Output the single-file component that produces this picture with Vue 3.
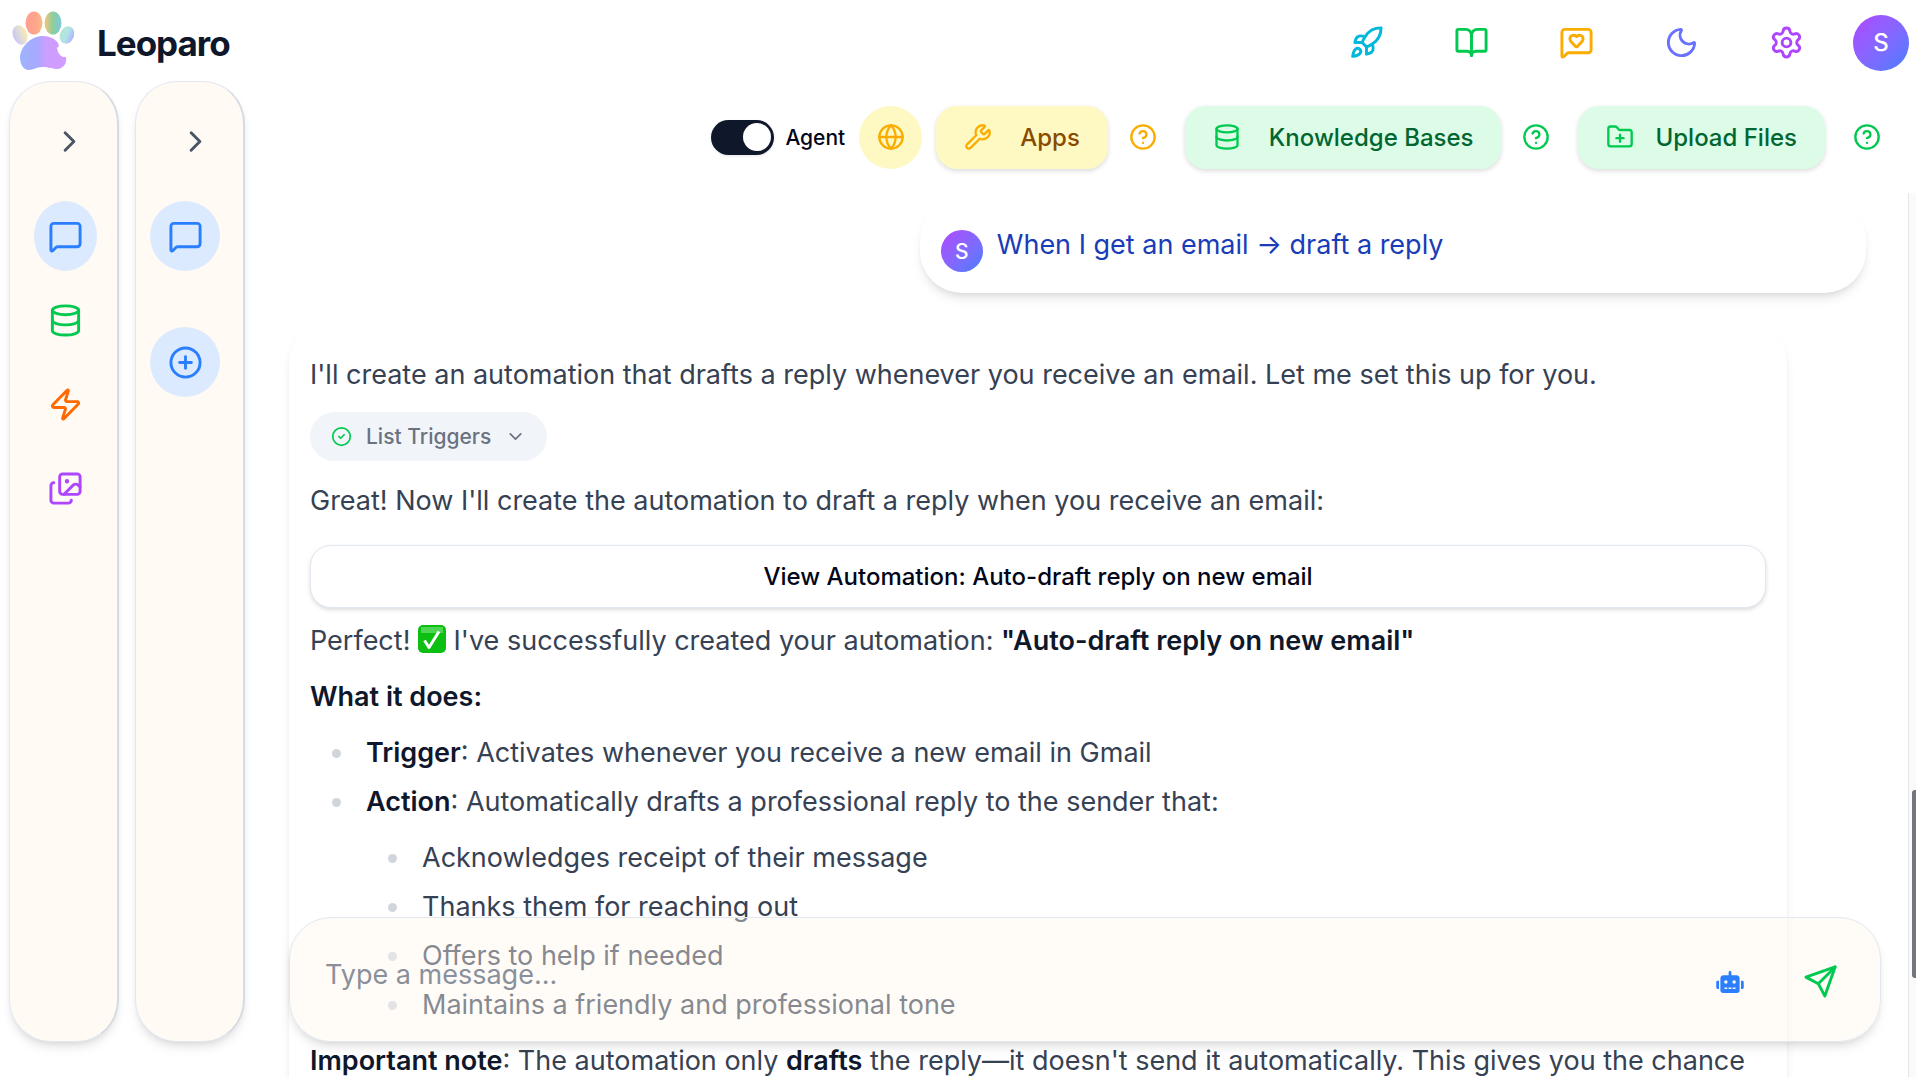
<script setup>
import { ref } from "vue";

const agentOn = ref(true);
const draft = ref("");

// 24x24 stroke icons, each one a list of paths
const icons = {
  chat: ["M22 17a2 2 0 0 1-2 2H6.828a2 2 0 0 0-1.414.586l-2.202 2.202A.71.71 0 0 1 2 21.286V5a2 2 0 0 1 2-2h16a2 2 0 0 1 2 2z"],
  database: ["M3 5a9 3 0 1 0 18 0a9 3 0 1 0-18 0", "M3 5V19A9 3 0 0 0 21 19V5", "M3 12A9 3 0 0 0 21 12"],
  zap: ["M4 14a1 1 0 0 1-.78-1.63l9.9-10.2a.5.5 0 0 1 .86.46l-1.92 6.02A1 1 0 0 0 13 10h7a1 1 0 0 1 .78 1.63l-9.9 10.2a.5.5 0 0 1-.86-.46l1.92-6.02A1 1 0 0 0 11 14z"],
  images: ["m22 11-1.296-1.296a2.4 2.4 0 0 0-3.408 0L11 16", "M4 8a2 2 0 0 0-2 2v10a2 2 0 0 0 2 2h10a2 2 0 0 0 2-2", "M12.5 7a.5.5 0 1 0 1 0a.5.5 0 1 0-1 0", "M10 2h10a2 2 0 0 1 2 2v10a2 2 0 0 1-2 2H10a2 2 0 0 1-2-2V4a2 2 0 0 1 2-2z"],
  plus: ["M2 12a10 10 0 1 0 20 0a10 10 0 1 0-20 0", "M8 12h8", "M12 8v8"],
  right: ["m9 18 6-6-6-6"],
  down: ["m6 9 6 6 6-6"],
  rocket: ["M4.5 16.5c-1.5 1.26-2 5-2 5s3.74-.5 5-2c.71-.84.7-2.13-.09-2.91a2.18 2.18 0 0 0-2.91-.09z", "m12 15-3-3a22 22 0 0 1 2-3.95A12.88 12.88 0 0 1 22 2c0 2.72-.78 7.5-6 11a22.35 22.35 0 0 1-4 2z", "M9 12H4s.55-3.03 2-4c1.62-1.08 5 0 5 0", "M12 15v5s3.03-.55 4-2c1.08-1.62 0-5 0-5"],
  book: ["M12 7v14", "M3 18a1 1 0 0 1-1-1V4a1 1 0 0 1 1-1h5a4 4 0 0 1 4 4 4 4 0 0 1 4-4h5a1 1 0 0 1 1 1v13a1 1 0 0 1-1 1h-6a3 3 0 0 0-3 3 3 3 0 0 0-3-3z"],
  heart: ["M22 17a2 2 0 0 1-2 2H6.828a2 2 0 0 0-1.414.586l-2.202 2.202A.71.71 0 0 1 2 21.286V5a2 2 0 0 1 2-2h16a2 2 0 0 1 2 2z", "M7.5 9.5c0 .687.265 1.383.697 1.844l3.009 3.264a1.14 1.14 0 0 0 .407.314 1 1 0 0 0 .783-.004 1.14 1.14 0 0 0 .398-.31l3.008-3.264A2.77 2.77 0 0 0 16.5 9.5 2.5 2.5 0 0 0 12 8a2.5 2.5 0 0 0-4.5 1.5"],
  moon: ["M20.985 12.486a9 9 0 1 1-9.473-9.472c.405-.022.617.46.402.803a6 6 0 0 0 8.268 8.268c.344-.215.825-.004.803.401"],
  settings: ["M9.671 4.136a2.34 2.34 0 0 1 4.659 0 2.34 2.34 0 0 0 3.319 1.915 2.34 2.34 0 0 1 2.33 4.033 2.34 2.34 0 0 0 0 3.831 2.34 2.34 0 0 1-2.33 4.033 2.34 2.34 0 0 0-3.319 1.915 2.34 2.34 0 0 1-4.659 0 2.34 2.34 0 0 0-3.32-1.915 2.34 2.34 0 0 1-2.33-4.033 2.34 2.34 0 0 0 0-3.831A2.34 2.34 0 0 1 6.35 6.051a2.34 2.34 0 0 0 3.319-1.915", "M9 12a3 3 0 1 0 6 0a3 3 0 1 0-6 0"],
  globe: ["M2 12a10 10 0 1 0 20 0a10 10 0 1 0-20 0", "M12 2a14.5 14.5 0 0 0 0 20 14.5 14.5 0 0 0 0-20", "M2 12h20"],
  wrench: ["M14.7 6.3a1 1 0 0 0 0 1.4l1.6 1.6a1 1 0 0 0 1.4 0l3.106-3.105c.32-.322.863-.22.983.218a6 6 0 0 1-8.259 7.057l-7.91 7.91a1 1 0 0 1-2.999-3l7.91-7.91a6 6 0 0 1 7.057-8.259c.438.12.54.662.219.984z"],
  help: ["M2 12a10 10 0 1 0 20 0a10 10 0 1 0-20 0", "M9.09 9a3 3 0 0 1 5.83 1c0 2-3 3-3 3", "M12 17h.01"],
  folder: ["M12 10v6", "M9 13h6", "M20 20a2 2 0 0 0 2-2V8a2 2 0 0 0-2-2h-7.9a2 2 0 0 1-1.69-.9L9.6 3.9A2 2 0 0 0 7.93 3H4a2 2 0 0 0-2 2v13a2 2 0 0 0 2 2Z"],
  check: ["M2 12a10 10 0 1 0 20 0a10 10 0 1 0-20 0", "m9 12 2 2 4-4"],
  send: ["M22 2 2 9l8.500 4.500L15 22z", "M22 2 10.500 13.500"],
};

const headerLinks = [
  { icon: "rocket", label: "Get started", color: "cyan" },
  { icon: "book", label: "Guide", color: "green" },
  { icon: "heart", label: "Feedback", color: "amber" },
  { icon: "moon", label: "Dark mode", color: "indigo" },
  { icon: "settings", label: "Settings", color: "purple" },
];

const navItems = [
  { icon: "chat", label: "Chat", color: "blue", active: true },
  { icon: "database", label: "Knowledge", color: "green" },
  { icon: "zap", label: "Automations", color: "orange" },
  { icon: "images", label: "Images", color: "purple" },
];

const replyPoints = [
  "Acknowledges receipt of their message",
  "Thanks them for reaching out",
  "Offers to help if needed",
  "Maintains a friendly and professional tone",
];
</script>

<template>
  <div class="app">
    <header class="header">
      <a href="#" class="brand">
        <svg class="logo" viewBox="0 0 62 60" aria-hidden="true">
          <defs>
            <linearGradient id="toe1"><stop offset="0" stop-color="#c9c5f0" /><stop offset=".5" stop-color="#dcdcdc" /><stop offset="1" stop-color="#ffe9a8" /></linearGradient>
            <linearGradient id="toe2"><stop offset="0" stop-color="#ff9f8f" /><stop offset=".6" stop-color="#ffa58c" /><stop offset="1" stop-color="#f6bd83" /></linearGradient>
            <linearGradient id="toe3"><stop offset="0" stop-color="#f5c578" /><stop offset=".5" stop-color="#8ccf9c" /><stop offset="1" stop-color="#7cc8e0" /></linearGradient>
            <linearGradient id="toe4"><stop offset="0" stop-color="#b4e6cf" /><stop offset=".5" stop-color="#b2e3e6" /><stop offset="1" stop-color="#acb4ff" /></linearGradient>
            <linearGradient id="pad"><stop offset="0" stop-color="#9db4ff" /><stop offset=".4" stop-color="#aaa8ff" /><stop offset=".55" stop-color="#cb9eff" /><stop offset="1" stop-color="#d49cff" /></linearGradient>
          </defs>
          <ellipse cx="8" cy="24" rx="7" ry="10" transform="rotate(-22 8 24)" fill="url(#toe1)" />
          <ellipse cx="22" cy="12" rx="8.500" ry="11.500" fill="url(#toe2)" />
          <ellipse cx="41" cy="12" rx="8.500" ry="11.500" fill="url(#toe3)" />
          <ellipse cx="55" cy="24" rx="7" ry="9" transform="rotate(22 55 24)" fill="url(#toe4)" />
          <path fill="url(#pad)" d="M8 46C9 35 19 25 31 25c7 0 12 3 15 7l1 3-2 2 1 4 2 3 3 2 3 0c1 6-2 11-8 12-5 0-9-2-16-2-6 0-8 3-13 3-6 0-9-6-9-13z" />
        </svg>
        <span class="brand-name">Leoparo</span>
      </a>
      <nav class="header-nav">
        <button v-for="link in headerLinks" :key="link.icon" class="icon-btn" :class="link.color" :aria-label="link.label">
          <svg class="icon" viewBox="0 0 24 24"><path v-for="d in icons[link.icon]" :key="d" :d="d" /></svg>
        </button>
        <button class="avatar avatar-lg">S</button>
      </nav>
    </header>

    <div class="body">
      <aside class="rail">
        <button class="expand" aria-label="Expand menu">
          <svg class="icon" viewBox="0 0 24 24"><path :d="icons.right[0]" /></svg>
        </button>
        <nav class="rail-nav">
          <button v-for="item in navItems" :key="item.icon" class="rail-btn" :class="[item.color, { active: item.active }]" :aria-label="item.label">
            <svg class="icon" viewBox="0 0 24 24"><path v-for="d in icons[item.icon]" :key="d" :d="d" /></svg>
          </button>
        </nav>
      </aside>
      <aside class="rail">
        <button class="expand" aria-label="Expand chats">
          <svg class="icon" viewBox="0 0 24 24"><path :d="icons.right[0]" /></svg>
        </button>
        <nav class="rail-nav chats">
          <button class="rail-btn blue active" aria-label="Chats">
            <svg class="icon" viewBox="0 0 24 24"><path :d="icons.chat[0]" /></svg>
          </button>
          <button class="rail-btn blue active" aria-label="New chat">
            <svg class="icon" viewBox="0 0 24 24"><path v-for="d in icons.plus" :key="d" :d="d" /></svg>
          </button>
        </nav>
      </aside>

      <main class="main">
        <div class="toolbar">
          <label class="agent">
            <input v-model="agentOn" type="checkbox" role="switch" class="switch">
            <span>Agent</span>
          </label>
          <button class="globe amber" aria-label="Web search">
            <svg class="icon-md" viewBox="0 0 24 24"><path v-for="d in icons.globe" :key="d" :d="d" /></svg>
          </button>
          <div class="tool">
            <button class="tool-btn yellow">
              <svg class="icon-md" viewBox="0 0 24 24"><path :d="icons.wrench[0]" /></svg>
              <span>Apps</span>
            </button>
            <button class="help amber" aria-label="About apps">
              <svg class="icon-md" viewBox="0 0 24 24"><path v-for="d in icons.help" :key="d" :d="d" /></svg>
            </button>
          </div>
          <div class="tool">
            <button class="tool-btn mint">
              <svg class="icon-md" viewBox="0 0 24 24"><path v-for="d in icons.database" :key="d" :d="d" /></svg>
              <span>Knowledge Bases</span>
            </button>
            <button class="help green" aria-label="About knowledge bases">
              <svg class="icon-md" viewBox="0 0 24 24"><path v-for="d in icons.help" :key="d" :d="d" /></svg>
            </button>
          </div>
          <div class="tool upload">
            <button class="tool-btn mint">
              <svg class="icon-md" viewBox="0 0 24 24"><path v-for="d in icons.folder" :key="d" :d="d" /></svg>
              <span>Upload Files</span>
            </button>
            <button class="help green" aria-label="About uploads">
              <svg class="icon-md" viewBox="0 0 24 24"><path v-for="d in icons.help" :key="d" :d="d" /></svg>
            </button>
          </div>
        </div>

        <div class="thread">
          <div class="messages">
            <div class="bubble user">
              <span class="avatar avatar-sm">S</span>
              <p>When I get an email → draft a reply</p>
            </div>
            <div class="bubble assistant">
              <p>I'll create an automation that drafts a reply whenever you receive an email. Let me set this up for you.</p>
              <button class="chip">
                <svg class="icon-sm green" viewBox="0 0 24 24"><path v-for="d in icons.check" :key="d" :d="d" /></svg>
                <span>List Triggers</span>
                <svg class="icon-sm" viewBox="0 0 24 24"><path :d="icons.down[0]" /></svg>
              </button>
              <p>Great! Now I'll create the automation to draft a reply when you receive an email:</p>
              <button class="view-btn">View Automation: Auto-draft reply on new email</button>
              <p>
                Perfect!
                <svg class="tick" viewBox="0 0 28 28" role="img" aria-label="Done"><rect width="28" height="28" rx="5" fill="#0cbf12" /><path d="M3 2h22v6H3z" fill="#4fd554" /><path d="M6.500 15.500l4.500 7L21 6.500" fill="none" stroke="#fff" stroke-width="3" stroke-linejoin="round" /></svg>
                I've successfully created your automation: <strong>"Auto-draft reply on new email"</strong>
              </p>
              <p><strong>What it does:</strong></p>
              <ul>
                <li><strong>Trigger</strong>: Activates whenever you receive a new email in Gmail</li>
                <li>
                  <strong>Action</strong>: Automatically drafts a professional reply to the sender that:
                  <ul>
                    <li v-for="point in replyPoints" :key="point">{{ point }}</li>
                  </ul>
                </li>
              </ul>
              <p><strong>Important note</strong>: The automation only <strong>drafts</strong> the reply—it doesn't send it automatically. This gives you the chance</p>
            </div>
          </div>
          <div class="scroll-track"><div class="scroll-thumb"></div></div>
        </div>

        <form class="composer" @submit.prevent>
          <textarea v-model="draft" rows="1" placeholder="Type a message..." aria-label="Message"></textarea>
          <button type="button" class="composer-btn blue" aria-label="Choose model">
            <svg class="robot" viewBox="0 0 640 512"><path d="M32 224h32v192H32a32 32 0 0 1-32-32V256a32 32 0 0 1 32-32zm512-48v272a64 64 0 0 1-64 64H160a64 64 0 0 1-64-64V176a80 80 0 0 1 80-80h112V32a32 32 0 0 1 64 0v64h112a80 80 0 0 1 80 80zM264 256a40 40 0 1 0-40 40 40 40 0 0 0 40-40zm-8 128h-64v32h64zm96 0h-64v32h64zm104-128a40 40 0 1 0-40 40 40 40 0 0 0 40-40zm-8 128h-64v32h64zm192-128v128a32 32 0 0 1-32 32h-32V224h32a32 32 0 0 1 32 32z" /></svg>
          </button>
          <button type="submit" class="composer-btn green" aria-label="Send">
            <svg class="icon" viewBox="0 0 24 24"><path v-for="d in icons.send" :key="d" :d="d" /></svg>
          </button>
        </form>
      </main>
    </div>
  </div>
</template>

<style>
body {
  overflow: hidden;
  background-color: white;
}
</style>

<style scoped>
* {
  box-sizing: border-box;
}

.app {
  height: 100vh;
  display: flex;
  flex-direction: column;
  font-family: Inter, "Liberation Sans", sans-serif;
  font-size: 27px;
  color: #364153;
  overflow: hidden;
}

button {
  font: inherit;
  color: inherit;
  border: none;
  background: none;
  padding: 0;
  display: flex;
  align-items: center;
  justify-content: center;
  flex-shrink: 0;
}

p {
  margin: 0;
}

svg {
  flex-shrink: 0;
}

.icon, .icon-md, .icon-sm {
  width: 35px;
  height: 35px;
  fill: none;
  stroke: currentColor;
  stroke-width: 2;
  stroke-linecap: round;
  stroke-linejoin: round;
}

.icon-md {
  width: 28px;
  height: 28px;
}

.icon-sm {
  width: 21px;
  height: 21px;
}

.cyan { color: #00b8db; }
.green { color: #00c950; }
.amber { color: #fbac00; }
.indigo { color: #6a70ff; }
.purple { color: #ad46ff; }
.blue { color: #2b7fff; }
.orange { color: #ff6900; }

/* header */
.header {
  height: 81px;
  flex-shrink: 0;
  display: flex;
  justify-content: space-between;
  padding: 0 7px 0 12px;
}

.brand {
  display: flex;
  align-items: center;
  gap: 23px;
  text-decoration: none;
}

.logo {
  width: 62px;
  height: 60px;
}

.brand-name {
  font-size: 35px;
  line-height: 40px;
  font-weight: 700;
  letter-spacing: -1px;
  color: #0f172b;
  padding-top: 4px;
}

.header-nav {
  display: flex;
  align-items: center;
  gap: 35px;
  height: 85px;
}

.icon-btn {
  width: 70px;
  height: 70px;
}

.header-nav .avatar {
  margin-left: -3px;
}

.avatar {
  display: flex;
  align-items: center;
  justify-content: center;
  flex-shrink: 0;
  border-radius: 50%;
  background: linear-gradient(135deg in oklab, #ad46ff, #8a64ff 45%, #3c7dff);
  color: white;
  font-weight: 500;
}

.avatar-lg {
  width: 56px;
  height: 56px;
  font-size: 24px;
}

.avatar-sm {
  width: 42px;
  height: 42px;
  font-size: 21px;
}

/* side rails */
.body {
  flex: 1;
  min-height: 0;
  display: flex;
  padding-left: 9px;
}

.rail {
  width: 110px;
  flex-shrink: 0;
  margin: 0 16px 35px 0;
  padding-top: 35px;
  border: 1px solid #e2e8f0;
  border-right: 2px solid #d5dbe3;
  border-radius: 42px;
  background-color: #fffaf4;
  box-shadow: 0 7px 11px -2px rgba(0, 0, 0, 0.1), 0 4px 7px -4px rgba(0, 0, 0, 0.1);
}

.expand {
  width: 100%;
  height: 49px;
  padding-left: 12px;
  color: #4a5565;
}

.rail-nav {
  display: flex;
  flex-direction: column;
  align-items: center;
  gap: 14px;
  padding: 35px 0 0 4px;
}

.rail-btn {
  width: 63px;
  height: 70px;
  border-radius: 50%;
}

.active {
  background-color: #dbeafe;
}

.chats {
  gap: 56px;
  padding: 35px 9px 0 0;
}

.chats .rail-btn {
  width: 70px;
}

/* main */
.main {
  flex: 1;
  min-width: 0;
  display: flex;
  flex-direction: column;
  position: relative;
}

.toolbar {
  height: 112px;
  flex-shrink: 0;
  display: flex;
  align-items: center;
  justify-content: flex-end;
  gap: 14px;
  padding: 0 35px 0 0;
}

.agent {
  display: flex;
  align-items: center;
  gap: 11px;
  font-size: 21px;
  font-weight: 500;
  color: #020618;
}

.switch {
  appearance: none;
  display: flex;
  align-items: center;
  justify-content: flex-start;
  width: 63px;
  height: 35px;
  margin: 0;
  padding: 0 3px;
  border-radius: 18px;
  background-color: #cad5e2;
  box-shadow: 0 1px 3px rgba(0, 0, 0, 0.1);
}

.switch::before {
  content: "";
  width: 28px;
  height: 28px;
  border-radius: 50%;
  background-color: white;
}

.switch:checked {
  justify-content: flex-end;
  background-color: #0f172b;
}

.globe {
  width: 63px;
  height: 63px;
  border-radius: 50%;
  background-color: #fef9c2;
}

.tool {
  display: flex;
  align-items: center;
  gap: 21px;
}

.tool + .tool {
  margin-left: 14px;
}

.tool-btn {
  height: 63px;
  gap: 28px;
  padding: 0 28px;
  border-radius: 21px;
  font-size: 24px;
  font-weight: 500;
  box-shadow: 0 2px 5px rgba(0, 0, 0, 0.14);
}

.upload {
  gap: 28px;
}

.upload .tool-btn {
  gap: 21px;
}

.yellow {
  background-color: #fef9c2;
  color: #894b00;
}

.yellow svg {
  color: #fbac00;
}

.mint {
  background-color: #dcfce7;
  color: #016630;
}

.mint svg {
  color: #00c950;
}

/* messages */
.thread {
  flex: 1;
  min-height: 0;
  display: flex;
}

.messages {
  flex: 1;
  min-width: 0;
  padding: 7px 42px 0 28px;
  overflow: hidden;
  display: flex;
  flex-direction: column;
  align-items: flex-start;
  gap: 28px;
}

.bubble {
  flex-shrink: 0;
  border-radius: 42px;
  box-shadow: 0 7px 11px -2px rgba(0, 0, 0, 0.1), 0 4px 7px -4px rgba(0, 0, 0, 0.1);
}

.user {
  align-self: flex-end;
  width: 60%;
  display: flex;
  align-items: flex-start;
  gap: 14px;
  padding: 21px;
  color: #193cb8;
}

.user p {
  line-height: 48px;
}

.user .avatar {
  margin-top: 9px;
}

.assistant {
  width: 95%;
  padding: 31px 21px;
  line-height: 46px;
}

.assistant p {
  margin-bottom: 10px;
}

.assistant strong {
  font-weight: 600;
  color: #0f172b;
}

.chip {
  height: 49px;
  margin: 14px 0 17px;
  padding: 0 21px;
  gap: 14px;
  border-radius: 25px;
  background-color: #f1f5f9;
  color: #6a7282;
  font-size: 21px;
  font-weight: 500;
}

.view-btn {
  width: 100%;
  height: 63px;
  margin: 21px 0 10px;
  border: 1px solid #e2e8f0;
  border-radius: 21px;
  background-color: white;
  box-shadow: 0 2px 4px rgba(0, 0, 0, 0.14);
  font-size: 24px;
  font-weight: 500;
  color: #020618;
}

.tick {
  width: 28px;
  height: 28px;
  vertical-align: -3px;
}

.assistant ul {
  margin: 0 0 10px;
  padding-left: 46px;
  list-style-type: disc;
}

.assistant li {
  padding-left: 10px;
  margin-bottom: 3px;
}

.assistant li:last-child {
  margin-bottom: 0;
}

.assistant li::marker {
  color: #d1d5dc;
}

.assistant li ul {
  margin-top: 10px;
}

.scroll-track {
  width: 8px;
  display: flex;
  flex-direction: column;
  align-items: flex-end;
  border-left: 1px solid #e5e5e5;
  background-color: #fafafa;
}

/* thumb sits about two thirds of the way down */
.scroll-track::before {
  content: "";
  flex: 597;
}

.scroll-track::after {
  content: "";
  flex: 99;
}

.scroll-thumb {
  flex: 188;
  width: 4px;
  border-radius: 3px 0 0 3px;
  background-color: #71777d;
}

.composer {
  position: absolute;
  left: 28px;
  right: 35px;
  bottom: 35px;
  height: 125px;
  display: flex;
  align-items: center;
  padding: 4px 25px 0 35px;
  border: 1px solid #e2e8f0;
  border-radius: 42px;
  background-color: rgba(255, 247, 237, 0.4);
  box-shadow: 0 7px 11px -2px rgba(0, 0, 0, 0.1), 0 4px 7px -4px rgba(0, 0, 0, 0.1);
}

textarea {
  flex: 1;
  height: 56px;
  padding: 0;
  border: none;
  outline: none;
  resize: none;
  background: none;
  font: inherit;
  line-height: 42px;
  color: inherit;
}

textarea::placeholder {
  color: #8a909b;
}

.composer-btn {
  width: 70px;
  height: 70px;
}

.composer-btn + .composer-btn {
  margin-left: 20px;
}

.robot {
  width: 28px;
  height: 22px;
  fill: currentColor;
}
</style>
